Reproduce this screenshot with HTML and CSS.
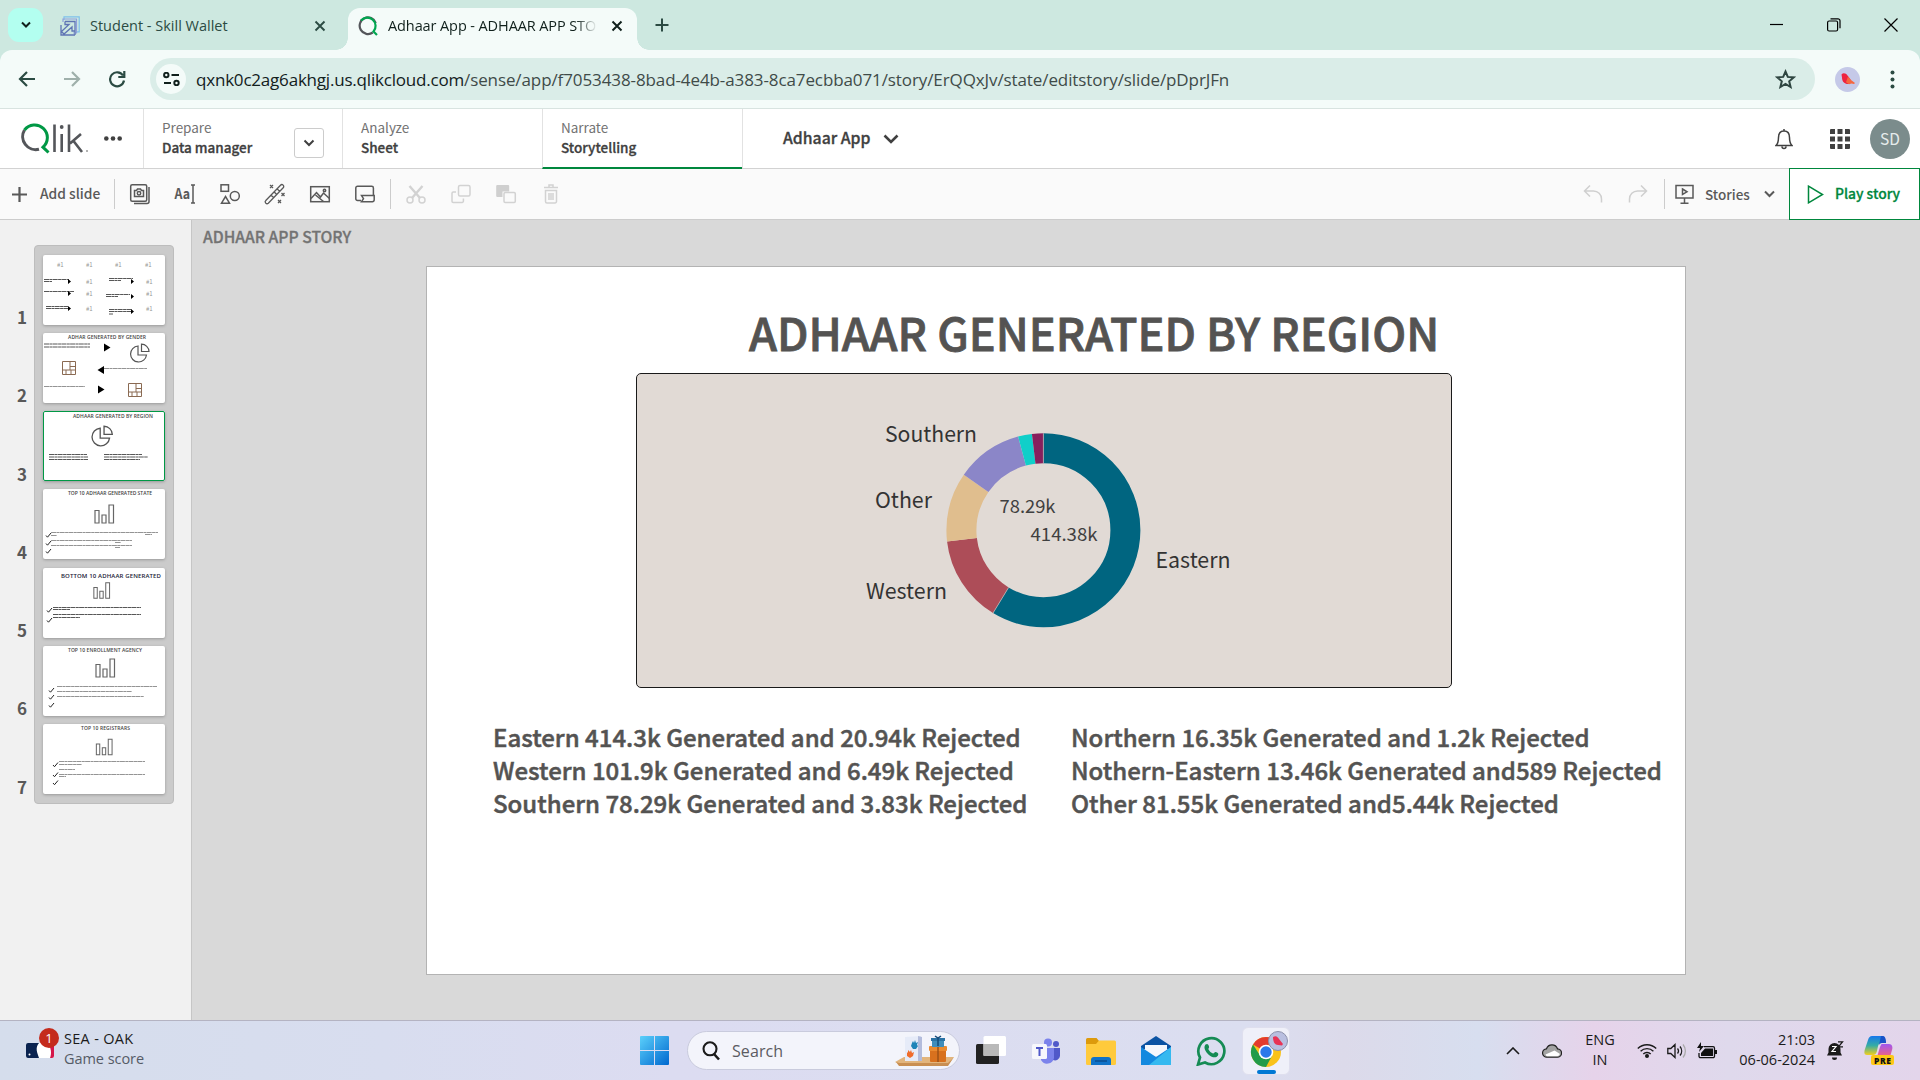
FILE: index.html
```html
<!DOCTYPE html>
<html lang="en">
<head>
<meta charset="utf-8">
<title>Adhaar App - ADHAAR APP STORY</title>
<link rel="stylesheet" href="styles.css">
</head>
<body>
<div class="tabs">
  <button class="tab-search"><svg width="12" height="12" viewBox="0 0 12 12"><path d="M2 3.5l4 4 4-4" fill="none" stroke="#10201c" stroke-width="2"/></svg></button>
  <div class="tab tab-idle">
    <svg width="20" height="20" viewBox="0 0 20 20" fill="none"><path d="M4 4V.8h15.2v15H16" stroke="#7fc0ea" stroke-width="1.2"/><path d="M3 6V3h13.500v14H13" stroke="#8f9fdc" stroke-width="1.200"/><path d="M5 5.500h10v13.500M1 9v10h14M5 5.500v3h4L1.500 15.500 4 18l8-7v4h3" stroke="#5f74b4" stroke-width="1.300"/></svg>
    <span class="tab-title t-student">Student - Skill Wallet</span>
    <svg class="tab-x" width="12" height="12" viewBox="0 0 12 12"><path d="M1.500 1.500l9 9m0-9l-9 9" stroke="#2b4b43" stroke-width="1.900"/></svg>
  </div>
  <div class="tab tab-active">
    <svg width="20" height="20" viewBox="0 0 20 20" fill="none"><path d="M14.800 16.500A8.300 8.300 0 1 1 17.800 7" stroke="#54565a" stroke-width="2.200"/><path d="M3 4.500A8.300 8.300 0 1 1 15.500 15.500L19 19" stroke="#00a650" stroke-width="2.200"/></svg>
    <span class="tab-title t-active">Adhaar App - ADHAAR APP STORY</span>
    <svg class="tab-x" width="12" height="12" viewBox="0 0 12 12"><path d="M1.500 1.500l9 9m0-9l-9 9" stroke="#10201c" stroke-width="2"/></svg>
  </div>
  <svg class="tab-new" width="14" height="14" viewBox="0 0 14 14"><path d="M7 .5v13M.5 7h13" stroke="#2b4b43" stroke-width="2"/></svg>
  <div class="winbtns">
    <svg width="14" height="14" viewBox="0 0 14 14"><path d="M0 6.500h13" stroke="#000" stroke-width="1.200"/></svg>
    <svg width="14" height="14" viewBox="0 0 14 14" fill="none" stroke="#000" stroke-width="1.200"><rect x=".6" y="3" width="10" height="10" rx="1.500"/><path d="M3.500.8H11a2 2 0 0 1 2 2v7.500"/></svg>
    <svg width="14" height="14" viewBox="0 0 14 14"><path d="M.5.500l13 13m0-13l-13 13" stroke="#000" stroke-width="1.200"/></svg>
  </div>
</div>
<div class="navwrap"><div class="nav">
  <div class="navbtns">
    <svg width="18" height="18" viewBox="0 0 18 18" fill="none" stroke="#2b4b43" stroke-width="2.200"><path d="M17 9H2.500M9 2L2 9l7 7"/></svg>
    <svg width="18" height="18" viewBox="0 0 18 18" fill="none" stroke="#9fb0ab" stroke-width="2.200"><path d="M1 9h14.500M9 2l7 7-7 7"/></svg>
    <svg width="18" height="18" viewBox="0 0 18 18" fill="none" stroke="#2b4b43" stroke-width="2.200"><path d="M15 5.500A7 7 0 1 0 16 10.500M16.300 1v6h-6"/></svg>
  </div>
  <div class="omni">
    <span class="chip"><svg width="17" height="14" viewBox="0 0 17 14" fill="none" stroke="#10201c" stroke-width="2"><circle cx="3.300" cy="3" r="2.200"/><path d="M8.500 3H16M1 11h7"/><circle cx="13.500" cy="11" r="2.200"/></svg></span>
    <span class="url">qxnk0c2ag6akhgj.us.qlikcloud.com<i>/sense/app/f7053438-8bad-4e4b-a383-8ca7ecbba071/story/ErQQxJv/state/editstory/slide/pDprJFn</i></span>
    <svg class="star" width="21" height="20" viewBox="0 0 21 20"><path d="M10.500 2.500l2.300 5.400 5.900.5-4.500 3.900 1.400 5.700-5.100-3-5.100 3 1.400-5.700L2.300 8.400l5.900-.5z" fill="none" stroke="#2f4641" stroke-width="2"/></svg>
  </div>
  <svg class="profile" width="25" height="25" viewBox="0 0 25 25"><circle cx="12.500" cy="12.500" r="12.500" fill="#c5c9e8"/><path d="M6.500 7.500c1.500-2 4.500-1.500 6 1l3 4-1.500 4.500c-4 .5-7-2-7-6.500z" fill="#ee2340"/><path d="M13 9.500l3 3.500 4 3-1 1-2.500-.5-2.500.8-3-2z" fill="#f5673f"/></svg>
  <svg width="5" height="19" viewBox="0 0 5 19" fill="#2b4b43"><circle cx="2.500" cy="2.500" r="2"/><circle cx="2.500" cy="9.500" r="2"/><circle cx="2.500" cy="16.500" r="2"/></svg>
</div></div>

<header class="app">
  <div class="brand">
    <svg width="70" height="32" viewBox="0 0 70 32" fill="none"><path d="M18 26.200A13 13 0 0 1 3.500 7" stroke="#54565a" stroke-width="3"/><path d="M3.500 7A12.700 12.700 0 1 1 22 24.200L27.500 29.500" stroke="#009845" stroke-width="3"/><path d="M33.500 1.500V29M40.700 11v18M48 1.500V29M60 11L49 20.500M52.500 18L61 29" stroke="#54565a" stroke-width="2.600"/><circle cx="40.700" cy="4" r="1.900" fill="#54565a"/><path d="M65 28h2" stroke="#999" stroke-width="1.500"/></svg>
    <svg width="18" height="5" viewBox="0 0 18 5" fill="#404040"><circle cx="2.300" cy="2.500" r="2.300"/><circle cx="9" cy="2.500" r="2.300"/><circle cx="15.700" cy="2.500" r="2.300"/></svg>
  </div>
  <div class="mode"><div><small>Prepare</small><b>Data manager</b></div><span class="drop"><svg width="12" height="12" viewBox="0 0 12 12"><path d="M1.500 3.500L6 8l4.500-4.500" fill="none" stroke="#404040" stroke-width="2"/></svg></span></div>
  <div class="mode"><div><small>Analyze</small><b>Sheet</b></div></div>
  <div class="mode mode-on"><div><small>Narrate</small><b>Storytelling</b></div></div>
  <div class="appname"><span>Adhaar App</span><svg width="16" height="12" viewBox="0 0 16 12"><path d="M1.500 2.500L8 9l6.500-6.500" fill="none" stroke="#404040" stroke-width="2.600"/></svg></div>
  <div class="hright">
    <svg width="18" height="22" viewBox="0 0 18 22" fill="none" stroke="#404040" stroke-width="1.500"><path d="M1 17.500h16c-2-2-2.500-4-2.500-8 0-4-2-6.500-5.500-6.500S3.500 5.500 3.500 9.500c0 4-.5 6-2.500 8zM9 3V1M7 18.500a2 2 0 0 0 4 0"/></svg>
    <svg width="20" height="20" viewBox="0 0 20 20" fill="#404040"><path d="M0 1a1 1 0 0 1 1-1h4v5H0zM7.500 0h5v5h-5zM15 0h4a1 1 0 0 1 1 1v4h-5zM0 7.500h5v5H0zM7.500 7.500h5v5h-5zM15 7.500h5v5h-5zM0 15h5v5H1a1 1 0 0 1-1-1zM7.500 15h5v5h-5zM15 15h5v4a1 1 0 0 1-1 1h-4z"/></svg>
    <span class="sd">SD</span>
  </div>
</header>

<div class="tools">
  <div class="add"><svg width="15" height="15" viewBox="0 0 15 15"><path d="M7.500 0v15M0 7.500h15" stroke="#595959" stroke-width="2.200"/></svg><span>Add slide</span></div>
  <div class="iconset">
    <svg viewBox="0 0 20 20"><rect x=".7" y=".7" width="16" height="16.500" rx="1.500"/><path d="M19 3v14.500a2 2 0 0 1-2 2H4"/><path d="M4.500 6.500h2l1-1.500h3l1 1.500h2v6h-9z"/><circle cx="9" cy="9.300" r="1.700"/></svg>
    <svg viewBox="0 0 20 20" class="aa"><text x="-.5" y="15" textLength="15.500" lengthAdjust="spacingAndGlyphs">Aa</text><path d="M16 1h4M16 19h4M18 1v18"/></svg>
    <svg viewBox="0 0 20 20"><rect x="1" y=".8" width="7.500" height="6.500"/><circle cx="14.800" cy="12" r="4.500"/><path d="M5.500 12.500l4 6.700h-8z"/></svg>
    <svg viewBox="0 0 20 20"><path d="M.8 16.500L15.500 1.200a1.800 1.800 0 0 1 2.700 2.600L3.300 19.200a1.800 1.800 0 0 1-2.500-2.700zM12 4.700l2.700 2.700M9 7.800l2.700 2.700M6 11l2.700 2.700M5 1l3 3m0-3L5 4M16.500 9l3 3m0-3l-3 3M13 16l3 3m0-3l-3 3" stroke-width="1.300"/></svg>
    <svg viewBox="0 0 20 20"><rect x=".7" y="2.700" width="18.600" height="15"/><path d="M1 14.500l5.500-6 4 4.500 3-4 6 5.500M5.500 11l8 6.500"/><circle cx="14.500" cy="6.500" r="1.200"/></svg>
    <svg viewBox="0 0 20 20"><path d="M6 16.500H2.500A1.700 1.700 0 0 1 .8 14.800V4a1.700 1.700 0 0 1 1.700-1.700h14.200A1.700 1.700 0 0 1 18.400 4v7.500M6.500 11.500h12.700v4.300a1.800 1.800 0 0 1-1.800 1.900H6.500l2-3z"/></svg>
  </div>
  <div class="iconset off">
    <svg viewBox="0 0 20 20"><circle cx="4" cy="16" r="3"/><circle cx="16" cy="16" r="3"/><path d="M6 14L16.500 2M14 14L3.500 2" stroke-width="2.400"/></svg>
    <svg viewBox="0 0 20 20"><rect x="7.500" y="1.500" width="11.500" height="10.500" rx="1.500"/><path d="M5 8H2.200A1.200 1.200 0 0 0 1 9.200v8a1.200 1.200 0 0 0 1.200 1.200h9a1.200 1.200 0 0 0 1.200-1.200V14.500"/></svg>
    <svg viewBox="0 0 20 20"><path d="M1.200 1h11a1 1 0 0 1 1 1v5.500H6.500V13H1.200a1 1 0 0 1-1-1V2a1 1 0 0 1 1-1z" fill="#cfcfcf" stroke="none"/><rect x="8" y="8.500" width="11.300" height="10" rx="1.200"/></svg>
    <svg viewBox="0 0 20 20"><path d="M3 3.500h14M8 3V1h4v2M4.500 6.500h11v11a1.500 1.500 0 0 1-1.500 1.500H6a1.500 1.500 0 0 1-1.500-1.500zM8 9v7M10 9v7M12 9v7"/></svg>
  </div>
  <div class="undo">
    <svg width="20" height="20" viewBox="0 0 20 20" fill="none" stroke="#cfcfcf" stroke-width="1.500"><path d="M7 1.500L1.500 7 7 12.500M1.500 7h9a8 8 0 0 1 8 8v3.500"/></svg>
    <svg width="20" height="20" viewBox="0 0 20 20" fill="none" stroke="#cfcfcf" stroke-width="1.500"><path d="M13 1.500L18.500 7 13 12.500M18.500 7h-9a8 8 0 0 0-8 8v3.500"/></svg>
  </div>
  <div class="stories"><svg width="20" height="20" viewBox="0 0 20 20" fill="none" stroke="#595959" stroke-width="1.500"><rect x="1" y="1.500" width="17" height="12.500"/><path d="M9.500 14v5M5.500 19.200h8M7.500 5l4.500 2.800-4.500 2.700z"/></svg><span>Stories</span><svg width="11" height="10" viewBox="0 0 11 10"><path d="M1 2.500L5.500 7 10 2.500" fill="none" stroke="#595959" stroke-width="2"/></svg></div>
  <div class="play"><svg width="17" height="19" viewBox="0 0 17 19"><path d="M1.500 1.200L15.500 9.500 1.500 17.800z" fill="none" stroke="#00873d" stroke-width="1.500"/></svg><span>Play story</span></div>
</div>

<main>
  <aside>
    <ol class="nums"><li>1</li><li>2</li><li>3</li><li>4</li><li>5</li><li>6</li><li>7</li></ol>
    <div class="thumbs">
      <svg viewBox="0 0 122 70"><defs>
        <g id="pie" fill="none" stroke="#555" stroke-width="1.200"><path d="M7 2.500A8 8 0 1 0 15.500 11.500H7z"/><path d="M10.500.7V8h7.500A7.500 7.500 0 0 0 10.500.7z"/></g>
        <g id="tree" fill="none" stroke="#8a6a52" stroke-width="1"><path d="M.5.500h13v13H.5zM8 .5V9M.5 9h13M8 5.500h5.500M4 9v4.500M9 9v4.500"/></g>
        <g id="bars" fill="none" stroke="#666" stroke-width="1.200"><path d="M1 6.500h4v12.500H1zM8 11h4v8H8zM15 1h4.500v18H15z"/></g>
        <path id="tick" d="M0 2.500l1.500 1.700L5 0" fill="none" stroke="#222" stroke-width="1"/></defs>
        <g class="hash"><text x="14" y="12">#1</text><text x="43" y="12">#1</text><text x="72" y="12">#1</text><text x="102" y="12">#1</text><text x="43" y="29">#1</text><text x="103" y="29">#1</text><text x="43" y="41">#1</text><text x="103" y="41">#1</text><text x="43" y="56">#1</text><text x="103" y="56">#1</text></g>
        <g class="ln dk"><path d="M1 24.500h25M1 26.500h8M1 36.500h30M3 51.500h22M3 53.500h22M66 23.500h24M66 25.500h12M63 39.500h24M63 41.500h12M66 54.500h23M66 56.500h22M66 59h4"/></g>
        <path d="M25 24l3 2.500-3 2.500zM25 36l3 2.500-3 2.500zM25 51l3 2.500-3 2.500zM88 24l3 2.500-3 2.500zM88 39l3 2.500-3 2.500zM88 54l3 2.500-3 2.500z"/>
      </svg>
      <svg viewBox="0 0 122 70"><text class="tt" x="25" y="5.500" textLength="78">ADHAR GENERATED BY GENDER</text><path class="ln dk" d="M1 11h46M1 14h46"/><path class="ln" d="M61 35.500h43M1 53.500h41"/><path d="M61 10.500l6.500 4-6.500 4zM61 33l-6.500 4 6.500 4zM55 52.500l6.500 4-6.500 4z"/><use href="#pie" x="88" y="10.500"/><use href="#tree" x="19" y="28"/><use href="#tree" x="85" y="50"/></svg>
      <svg viewBox="0 0 122 70" class="sel"><text class="tt" x="30" y="7" textLength="80">ADHAAR GENERATED BY REGION</text><g transform="translate(49.500 14.500) scale(1.100)"><use href="#pie"/></g><path class="ln dk" d="M6 43.500h38M6 46h39M6 48.500h39M61 43.500h38M61 46h44M61 48.500h36"/></svg>
      <svg viewBox="0 0 122 70"><text class="tt" x="25" y="5.500" textLength="84">TOP 10 ADHAAR GENERATED STATE</text><use href="#bars" x="51" y="15"/><path class="ln" d="M8 43.500h107M8 46.500h6M102 45.500h7M8 51.500h81M72 53.500h6M8 56.500h81M72 58.500h5"/><use href="#tick" x="3" y="44"/><use href="#tick" x="3" y="52"/><use href="#tick" x="3" y="60"/></svg>
      <svg viewBox="0 0 122 70"><text class="tt big" x="18" y="9.800" textLength="100">BOTTOM 10 ADHAAR GENERATED</text><g transform="translate(50 14) scale(.85)"><use href="#bars"/></g><path class="ln dk" d="M10 39.500h88M10 41.500h17M10 46.500h88M10 49.500h27"/><use href="#tick" x="4" y="40"/><use href="#tick" x="4" y="50"/></svg>
      <svg viewBox="0 0 122 70"><text class="tt" x="25" y="5.500" textLength="74">TOP 10 ENROLLMENT AGENCY</text><use href="#bars" x="52" y="12"/><path class="ln" d="M14 40.500h100M14 45.500h75M14 50.500h87"/><use href="#tick" x="6" y="42"/><use href="#tick" x="6" y="49"/><use href="#tick" x="6" y="57"/></svg>
      <svg viewBox="0 0 122 70"><text class="tt" x="38" y="5.500" textLength="49">TOP 10 REGISTRARS</text><g transform="translate(52.500 14.500) scale(.85)"><use href="#bars"/></g><path class="ln" d="M16 37.500h86M16 40.500h23M16 45.500h16M16 50.500h86M16 52.500h7"/><use href="#tick" x="10" y="38.500"/><use href="#tick" x="10" y="48.500"/><use href="#tick" x="10" y="56.500"/></svg>
    </div>
  </aside>
  <section class="stage">
    <h2>ADHAAR APP STORY</h2>
    <article class="slide">
      <h1>ADHAAR GENERATED BY REGION</h1>
      <svg class="chart" viewBox="0 0 814 313" width="814" height="313">
        <g class="ring" transform="rotate(-90 406.400 156.200)">
          <circle cx="406.400" cy="156.200" r="82" pathLength="705.930" stroke="#006580" stroke-dasharray="414.380 705.930"/>
          <circle cx="406.400" cy="156.200" r="82" pathLength="705.930" stroke="#ad4d58" stroke-dasharray="101.900 705.930" stroke-dashoffset="-414.380"/>
          <circle cx="406.400" cy="156.200" r="82" pathLength="705.930" stroke="#e0be8e" stroke-dasharray="81.550 705.930" stroke-dashoffset="-516.280"/>
          <circle cx="406.400" cy="156.200" r="82" pathLength="705.930" stroke="#8b86c8" stroke-dasharray="78.290 705.930" stroke-dashoffset="-597.830"/>
          <circle cx="406.400" cy="156.200" r="82" pathLength="705.930" stroke="#10cfc9" stroke-dasharray="16.350 705.930" stroke-dashoffset="-676.120"/>
          <circle cx="406.400" cy="156.200" r="82" pathLength="705.930" stroke="#87205d" stroke-dasharray="13.460 705.930" stroke-dashoffset="-692.470"/>
        </g>
        <path d="M406.400 59.200v30M356 239.100l15.600-25.600" stroke="#b5b5b5" stroke-width=".8"/>
        <g class="lab"><text x="248" y="68" textLength="92" lengthAdjust="spacingAndGlyphs">Southern</text><text x="238" y="133.800" textLength="57" lengthAdjust="spacingAndGlyphs">Other</text><text x="229" y="225" textLength="81" lengthAdjust="spacingAndGlyphs">Western</text><text x="518.500" y="194" textLength="75" lengthAdjust="spacingAndGlyphs">Eastern</text></g>
        <g class="val"><text x="362.500" y="138.500" textLength="56" lengthAdjust="spacingAndGlyphs">78.29k</text><text x="393.500" y="166.500" textLength="67" lengthAdjust="spacingAndGlyphs">414.38k</text></g>
      </svg>
      <div class="cols">
        <p>Eastern 414.3k Generated and 20.94k Rejected<br>Western 101.9k Generated and 6.49k Rejected<br>Southern 78.29k Generated and 3.83k Rejected</p>
        <p>Northern 16.35k Generated and 1.2k Rejected<br>Nothern-Eastern 13.46k Generated and589 Rejected<br>Other 81.55k Generated and5.44k Rejected</p>
      </div>
    </article>
  </section>
</main>

<footer>
  <div class="widget">
    <div class="mlb"><svg width="28" height="15" viewBox="0 0 28 15"><rect width="28" height="15" rx="2" fill="#fff"/><path d="M2 0h11c-4 5-2 9 0 15H2a2 2 0 0 1-2-2V2a2 2 0 0 1 2-2z" fill="#0a2350"/><path d="M22 0h4a2 2 0 0 1 2 2v11a2 2 0 0 1-2 2h-2c2-5 1-10-2-15z" fill="#d5174a"/><circle cx="3.500" cy="11.500" r="1" fill="#fff"/></svg><span class="badge">1</span></div>
    <div class="wtext"><span class="w1">SEA - OAK</span><span class="w2">Game score</span></div>
  </div>
  <div class="dock">
    <svg class="win" width="29" height="29" viewBox="0 0 29 29"><defs><linearGradient id="wg" x1="0" y1="0" x2="1" y2="1"><stop offset="0" stop-color="#5bd0fb"/><stop offset="1" stop-color="#0068cf"/></linearGradient></defs><path d="M1 0h13v14H0V1a1 1 0 0 1 1-1zM15 0h13a1 1 0 0 1 1 1v13H15zM0 15h14v14H1a1 1 0 0 1-1-1zM15 15h14v13a1 1 0 0 1-1 1H15z" fill="url(#wg)"/></svg>
    <div class="search"><svg width="20" height="20" viewBox="0 0 20 20" fill="none" stroke="#1b1b1b" stroke-width="2.100"><circle cx="9" cy="7.800" r="6.500"/><path d="M13 13l5 5.500" stroke-width="2.600"/></svg><span>Search</span>
      <svg class="gift" width="60" height="32" viewBox="0 0 60 32"><path d="M0 27l9-5h50l-6 7H4z" fill="#e2b57d"/><path d="M1 27l3 4h49l6-9-6 6H4z" fill="#c98f52"/><path d="M10 2l16-1v25H10z" fill="#e6ebf8"/><path d="M23 1l4 1v24h-4z" fill="#b3bcdc"/><path d="M17 8l1-2 1 2 1-3 1 3 2-1-1 3 1 1-2 3h-3l-2-3z" fill="#1d84b8"/><path d="M12 17l1 1v-3l2 2 1-2 1 3 2-1-1 4-3 2-3-2z" fill="#f06c2b"/><rect x="35" y="15" width="16" height="12" rx="1" fill="#d8711e"/><rect x="34" y="11" width="18" height="5" rx="1" fill="#e98a30"/><rect x="37" y="5" width="12" height="7" fill="#3f8dbb"/><rect x="36" y="3" width="14" height="3" fill="#2a73a5"/><path d="M43 3V11M40 1l3 2 3-2" fill="none" stroke="#154b78" stroke-width="1.500"/><path d="M43 12v15" stroke="#9d5217" stroke-width="1.500"/></svg></div>
    <svg width="30" height="30" viewBox="0 0 30 30"><rect y="8" width="23" height="20" rx="1.500" fill="#222"/><rect x="7.500" y="0" width="22.500" height="20" rx="1.500" fill="#fff"/><path d="M7.500 8H23v12H7.500z" fill="#b9b9b9"/></svg>
    <svg width="30" height="28" viewBox="0 0 30 28"><circle cx="25" cy="7" r="3" fill="#5059c9"/><circle cx="17" cy="5.500" r="4" fill="#7b83eb"/><path d="M20 11h9v8a5 5 0 0 1-7 4z" fill="#5059c9"/><path d="M10 11h13v10a7 7 0 0 1-13 2z" fill="#7b83eb"/><rect x="1" y="7" width="15" height="15" rx="1.500" fill="#f7f8fc"/><path d="M5 11h7M8.500 11v8" stroke="#5059c9" stroke-width="2"/></svg>
    <svg width="30" height="28" viewBox="0 0 30 28"><path d="M1.500 1h9l3 3.500V10H0V2.500A1.500 1.500 0 0 1 1.500 1z" fill="#dd9a0c"/><path d="M0 7h10l3-3.500h15.500A1.500 1.500 0 0 1 30 5v21.500a1.500 1.500 0 0 1-1.500 1.500h-27A1.500 1.500 0 0 1 0 26.500z" fill="#ffca3c"/><path d="M5 28v-5a3 3 0 0 1 3-3h14a3 3 0 0 1 3 3v5z" fill="#0f72c8"/><path d="M9 24h12" stroke="#0a4e90" stroke-width="1.500"/></svg>
    <svg width="30" height="29" viewBox="0 0 30 29"><path d="M0 10L15 0l15 10v3H0z" fill="#0b53a3"/><path d="M4 9h22v11H4z" fill="#f4f7fc"/><path d="M0 11l15 10 15-10v18H0z" fill="#1389df"/><path d="M30 11L8 29h22z" fill="#35b9f0"/></svg>
    <svg width="30" height="30" viewBox="0 0 30 30"><path d="M2 28.500l2-7A13 13 0 1 1 9 26.500z" fill="none" stroke="#158b54" stroke-width="2.700"/><path d="M9.500 8.500c2-1.500 3 0 3.500 2 .5 1.300-1 2-.5 3 1 2 2.500 3.300 4.500 4 1 .3 1.600-1.700 2.700-1.400 2 .8 3.300 1.300 2.300 3.300-2 3-6 2-9-.5-3.500-3-6-7.500-3.500-10.400z" fill="#158b54"/></svg>
    <div class="chrome"><svg width="42" height="38" viewBox="0 0 42 38"><circle cx="19" cy="22" r="15" fill="#f9c21a"/><path d="M19 22L6 14.500A15 15 0 0 1 32 14.500L19 15z" fill="#e33b2e"/><path d="M6 14.500A15 15 0 0 0 19 37L25.200 25.500 19 22l-6 3.500z" fill="#239b49"/><circle cx="19" cy="22" r="7.300" fill="#fff"/><circle cx="19" cy="22" r="5.700" fill="#2b78ea"/><circle cx="31" cy="11" r="9.500" fill="#b9bfe0" stroke="#8d91ab"/><path d="M26 7c3-2 5 0 6 2l4 5-1 1.500-4-.5c-3 0-5-3-5-8z" fill="#e83355"/></svg><i></i></div>
  </div>
  <div class="tray">
    <svg class="caret" width="14" height="8" viewBox="0 0 14 8"><path d="M1 7l6-6 6 6" fill="none" stroke="#1b1b1b" stroke-width="1.600"/></svg>
    <svg class="cloud" width="20" height="14" viewBox="0 0 20 14"><path d="M5 13.200a4.200 4.200 0 0 1-.5-8.400 5.800 5.800 0 0 1 11 0 4.200 4.200 0 0 1-.3 8.400z" fill="#a3a3a3"/><path d="M3.500 10.500l9-4 5.500 3.500-2.500 3H5z" fill="#fff"/><path d="M5 13.200a4.200 4.200 0 0 1-.5-8.400 5.800 5.800 0 0 1 11 0 4.200 4.200 0 0 1-.3 8.400z" fill="none" stroke="#222" stroke-width="1.200"/></svg>
    <div class="lang">ENG<br>IN</div>
    <svg class="wifi" width="20" height="15" viewBox="0 0 20 15" fill="none" stroke="#1b1b1b" stroke-width="1.400"><path d="M.8 5.500a13 13 0 0 1 18.400 0M3.600 8.300a9 9 0 0 1 12.800 0M6.300 11a5.200 5.200 0 0 1 7.400 0"/><circle cx="10" cy="13" r="1.300" fill="#1b1b1b"/></svg>
    <svg class="vol" width="20" height="16" viewBox="0 0 20 16" fill="none" stroke="#1b1b1b" stroke-width="1.300"><path d="M.8 5.500h3L8 1.500v13l-4.200-4h-3zM10.500 5.500a4 4 0 0 1 0 5M13 3.500a7 7 0 0 1 0 9"/><path d="M16 1.500a10 10 0 0 1 0 13" stroke="#aaa"/></svg>
    <svg class="bat" width="20" height="17" viewBox="0 0 20 17"><path d="M7 4.700h9a1.500 1.500 0 0 1 1.500 1.500v8a1.500 1.500 0 0 1-1.500 1.500H3.500A1.500 1.500 0 0 1 2 14.200V11" fill="none" stroke="#111" stroke-width="1.300"/><path d="M8 6.500h8v7.500H4v-3zM18 8h2v4h-2zM4 0L0 6h3l-1 4 5-6H4z" fill="#111"/></svg>
    <div class="clock">21:03<br>06-06-2024</div>
    <svg class="dnd" width="18" height="20" viewBox="0 0 18 20"><path d="M1 14.500l1.500-3V8a6 6 0 0 1 12 0v3.500l1.500 3zM6 16.500h5a2.500 2.500 0 0 1-5 0z" fill="#1b1b1b"/><path d="M6 5.500h4l-4 5h4" stroke="#fff" fill="none" stroke-width="1.200"/><path d="M12 .8h4.500l-4 5H17" stroke="#1b1b1b" fill="none" stroke-width="1.300"/></svg>
    <svg class="copilot" width="30" height="30" viewBox="0 0 30 30"><defs><linearGradient id="ca" x1="0" y1="0" x2="0" y2="1"><stop offset="0" stop-color="#1678ec"/><stop offset=".5" stop-color="#35aca5"/><stop offset="1" stop-color="#f3cf1d"/></linearGradient><linearGradient id="cb" x1="0" y1="0" x2="0" y2="1"><stop offset="0" stop-color="#a056ef"/><stop offset="1" stop-color="#f4647c"/></linearGradient></defs><path d="M8 0h10c3 0 3 3 4 7h-5c-3 0-3 4-4 8-1 3-2 4-4 4H3c-3 0-3-3-2-6L4 4c1-3 2-4 4-4z" fill="url(#ca)"/><path d="M17 0h2c2 0 3 3 3 7h-4c-2 0-3 2-3 2z" fill="#1852c8"/><path d="M18 8h7c3 0 4 3 3 6l-2 7H13l3-10c1-2 1-3 2-3z" fill="url(#cb)"/><rect x="7" y="19" width="23" height="10" rx="2" fill="#fdc816"/><text x="10" y="27.500" textLength="17">PRE</text></svg>
  </div>
</footer>
</body>
</html>
```
FILE: styles.css
```css
* { box-sizing: border-box; }
body { margin: 0; width: 1920px; height: 1080px; overflow: hidden; display: flex; flex-direction: column; font-family: "Noto Sans CJK SC", "Open Sans", sans-serif; color: #404040; background: #d9d9d9; }
svg { display: block; flex: none; }
button { border: 0; padding: 0; }

/* browser chrome */
.tabs, .nav { font-family: "Open Sans", "Noto Sans", sans-serif; }
.tabs { height: 50px; flex: none; background: #cde8e0; display: flex; align-items: flex-start; padding-left: 8px; }
.tab-search { width: 35px; height: 34px; margin-top: 8px; border-radius: 11px; background: #b3fff0; display: flex; align-items: center; justify-content: center; }
.tab { height: 42px; margin-top: 8px; display: flex; align-items: center; padding-bottom: 7px; }
.tab-idle { width: 305px; padding-left: 17px; color: #2b4b43; }
.tab-active { position: relative; width: 289px; padding-left: 10px; background: #f4fbf9; border-radius: 12px 12px 0 0; color: #10201c; }
.tab-active::before, .tab-active::after { content: ""; position: absolute; bottom: 0; width: 12px; height: 12px; }
.tab-active::before { left: -12px; background: radial-gradient(circle at 0 0, transparent 11.500px, #f4fbf9 12px); }
.tab-active::after { right: -12px; background: radial-gradient(circle at 100% 0, transparent 11.500px, #f4fbf9 12px); }
.tab-title { margin-left: 10px; font-size: 14.500px; white-space: nowrap; overflow: hidden; }
.t-student { width: 224px; }
.t-active { width: 209px; letter-spacing: -.1px; -webkit-mask-image: linear-gradient(90deg, #000 90%, transparent); mask-image: linear-gradient(90deg, #000 90%, transparent); }
.t-active + .tab-x { margin-left: 14px; }
.tab-new { margin: 18px 0 0 18px; }
.winbtns { display: flex; gap: 43px; margin: 18px 22px 0 auto; }
.navwrap { height: 59px; flex: none; background: #cde8e0; }
.nav { height: 59px; display: flex; align-items: center; background: #f4fbf9; border-radius: 12px 12px 0 0; border-bottom: 1px solid #d8e3e0; padding-left: 18px; }
.navbtns { display: flex; gap: 27px; width: 132px; }
.omni { width: 1665px; height: 42px; border-radius: 21px; background: #daede8; display: flex; align-items: center; padding-left: 6px; }
.chip { width: 30px; height: 30px; border-radius: 50%; background: #f4fbf9; display: flex; align-items: center; justify-content: center; }
.url { margin-left: 10px; font-size: 17px; letter-spacing: -.2px; color: #12201c; white-space: nowrap; }
.url i { font-style: normal; color: #3f4b48; letter-spacing: -.1px; }
.star { margin: 0 19px 0 auto; }
.profile { margin: 0 30px 0 20px; }

/* app header */
.app { height: 60px; flex: none; background: #fff; border-bottom: 1px solid #d2d2d2; display: flex; }
.brand { width: 143px; display: flex; align-items: center; gap: 13px; padding-left: 21px; }
.mode { width: 200px; border-left: 1px solid #e2e2e2; display: flex; justify-content: space-between; padding: 8px 18px 0 18px; line-height: 20px; }
.mode:nth-child(2) { width: 199px; }
.mode small, .mode b { display: block; font-size: 13.500px; }
.mode small { color: #737373; font-weight: 400; }
.mode b { font-weight: 500; color: #404040; -webkit-text-stroke: .3px #404040; }
.mode-on { height: 60px; border-bottom: 2px solid #00873d; }
.drop { width: 30px; height: 30px; margin-top: 11px; border: 1px solid #ccc; border-radius: 3px; display: flex; align-items: center; justify-content: center; }
.appname { border-left: 1px solid #e2e2e2; padding-left: 40px; display: flex; align-items: center; gap: 12px; font-size: 15.800px; font-weight: 500; -webkit-text-stroke: .3px #404040; }
.appname span { padding-bottom: 2px; }
.hright { margin-left: auto; display: flex; align-items: center; padding-right: 10px; }
.hright svg + svg { margin: 0 20px 0 37px; }
.sd { width: 40px; height: 40px; border-radius: 50%; background: #7b8c8c; color: #e6ebeb; font-size: 15.500px; display: flex; align-items: center; justify-content: center; padding-bottom: 1px; }

/* story toolbar */
.tools { height: 51px; flex: none; background: #fafafa; border-bottom: 1px solid #ccc; display: flex; align-items: center; color: #595959; font-size: 13.800px; font-weight: 500; }
.add { width: 114px; padding-left: 12px; display: flex; align-items: center; gap: 13px; }
.add span, .play span { padding-bottom: 2px; }
.iconset { height: 30px; display: flex; align-items: center; gap: 25px; border-left: 1px solid #ccc; padding: 0 15px; }
.iconset svg { width: 20px; height: 20px; overflow: visible; fill: none; stroke: #595959; stroke-width: 1.500; }
.aa text { font-size: 14px; font-weight: 600; fill: #595959; stroke: none; }
.off svg { stroke: #d2d2d2; }
.undo { margin-left: auto; display: flex; gap: 25px; padding-right: 16px; }
.stories { height: 30px; width: 125px; border-left: 1px solid #ccc; display: flex; align-items: center; padding-left: 10px; font-size: 13.500px; }
.stories span { margin: 0 14px 0 10px; }
.play { align-self: stretch; width: 131px; margin: -1px 0; border: 1px solid #00873d; color: #00873d; background: #fff; display: flex; align-items: center; gap: 11px; padding-left: 17px; position: relative; -webkit-text-stroke: .3px #00873d; }

/* slide list */
main { flex: 1; display: flex; min-height: 0; }
aside { width: 192px; background: #f1f1f1; border-right: 1px solid #c6c6c6; display: flex; align-items: flex-start; }
.nums { list-style: none; margin: 57px 0 0; padding: 0 7px 0 0; width: 34px; text-align: right; font-size: 17px; font-weight: 600; color: #595959; }
.nums li { height: 78.300px; padding-top: 26px; line-height: 28px; }
.thumbs { width: 140px; height: 559px; margin-top: 25px; padding: 9px 8px; border: 1px solid #bdbdbd; border-radius: 4px; background: #cbcbcb; display: flex; flex-direction: column; justify-content: space-between; }
.thumbs svg { width: 122px; height: 70px; background: #fff; border-radius: 2px; box-shadow: 0 1px 3px rgba(0, 0, 0, .25); }
.thumbs .sel { outline: 1px solid #009845; outline-offset: -1px; }
.tt { font: 600 5px "Open Sans", sans-serif; fill: #444; }
.big { font-size: 6px; fill: #1a2238; }
.hash text { font-size: 6px; fill: #999; }
.ln { fill: none; stroke: #888; stroke-width: .9; stroke-dasharray: 5 .4 3 .3; }
.dk { stroke: #444; }

/* slide */
.stage { flex: 1; }
.stage h2 { margin: 6px 0 0 11px; height: 22px; line-height: 22px; font-size: 15.700px; font-weight: 500; color: #737373; -webkit-text-stroke: .3px #737373; }
.slide { width: 1260px; height: 709px; margin: 18px 0 0 234px; background: #fff; border: 1px solid #b3b3b3; padding: 27px 0 0 66px; color: #545352; }
.slide h1 { margin: 0 0 4px 256px; height: 75px; line-height: 75px; font-size: 45px; font-weight: 500; -webkit-text-stroke: .8px #545352; white-space: nowrap; }
.chart { box-sizing: content-box; margin-left: 143px; border: 1px solid #1a1a1a; border-radius: 5px; background: #e1dad5; }
.ring { fill: none; stroke-width: 30; }
.lab { font-size: 22px; fill: #333; }
.val { font-size: 18px; fill: #404040; }
.cols { display: grid; grid-template-columns: 578px 600px; padding-top: 32px; }
.cols p { margin: 0; font-size: 24px; line-height: 33px; font-weight: 500; -webkit-text-stroke: .5px #545352; white-space: nowrap; }

/* taskbar */
footer { height: 60px; flex: none; border-top: 1px solid #b4b3c2; display: flex; align-items: center; font-family: "Open Sans", "Noto Sans", sans-serif; color: #1b1b1b; background: linear-gradient(90deg, #d5ddec 0, #d8ddef 20%, #dcdcf1 35%, #dbdef0 65%, #dcdaea 70%, #d7deef 77%, #e6d3ea 83%, #dfd9ec 90%, #e3d5eb 100%); }
.widget { width: 640px; display: flex; padding-left: 26px; gap: 10px; align-items: center; }
.mlb { position: relative; }
.badge { position: absolute; left: 13px; top: -15px; width: 20px; height: 20px; border-radius: 50%; background: #c42b1c; color: #fff; font-size: 13px; line-height: 20px; text-align: center; }
.wtext { padding-bottom: 3px; }
.wtext span { display: block; line-height: 20px; font-size: 14.500px; }
.w1 { letter-spacing: .3px; }
.w2 { color: #555b66; letter-spacing: -.05px; }
.dock { display: flex; align-items: center; width: 866px; }
.search { width: 273px; height: 39px; margin: 0 16px 0 18px; border-radius: 20px; background: #f3f4fb; border: 1px solid #c9cbdd; display: flex; align-items: center; padding-left: 13px; font-size: 16px; color: #5b5b62; }
.search span { margin-left: 11px; letter-spacing: .1px; }
.gift { margin: 0 4px 0 auto; }
.dock > svg + svg { margin-left: 25px; }
.chrome { position: relative; width: 48px; height: 48px; margin-left: 16px; border-radius: 6px; background: #eff0f9; border: 1px solid #dfdfee; }
.chrome svg { margin-left: 4px; margin-top: 2px; }
.chrome i { position: absolute; left: 14px; bottom: 0; width: 19px; height: 4px; border-radius: 2px; background: #0078d4; }
.tray { display: flex; align-items: center; font-size: 14.500px; line-height: 20px; }
.cloud { margin-left: 22px; }
.lang { width: 40px; margin-left: 18px; text-align: center; }
.wifi { margin-left: 17px; }
.vol { margin-left: 10px; }
.bat { margin-left: 10px; }
.clock { width: 98px; text-align: right; }
.lang, .clock { padding-bottom: 1px; }
.dnd { margin-left: 11px; }
.copilot { margin-left: 20px; }
.copilot text { font: 800 8.500px "Open Sans", sans-serif; fill: #111; }
```
